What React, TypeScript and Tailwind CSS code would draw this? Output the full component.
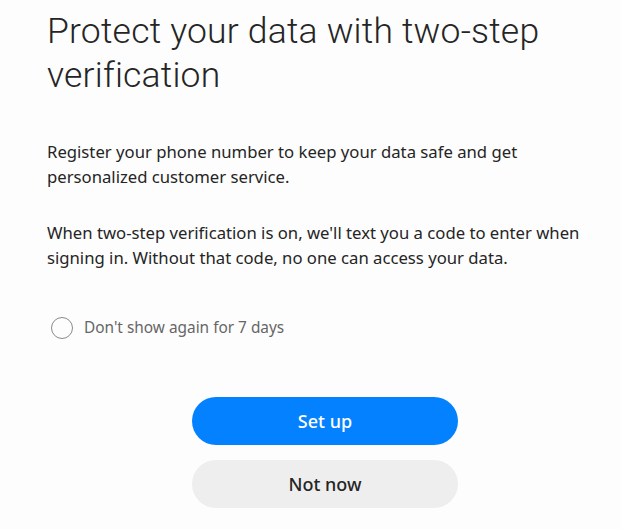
import React, { useState } from 'react';

const App: React.FC = () => {
  const [dontShow, setDontShow] = useState(false);

  return (
    <div
      className="min-h-screen w-full bg-[#fdfdfd] text-[#252525]"
      style={{ fontFamily: '"Noto Sans", Roboto, sans-serif' }}
    >
      <div className="pl-[47px] pt-[9px] w-[600px]">
        <h1
          className="text-[35.5px] leading-[44px] font-light tracking-[0.2px] w-[540px]"
          style={{ fontFamily: 'Roboto, "Noto Sans", sans-serif' }}
        >
          Protect your data with two-step verification
        </h1>

        <div className="mt-[42px] w-[545px] text-[16.7px] leading-[25px]">
          <p>
            Register your phone number to keep your data safe and get personalized customer service.
          </p>
          <p className="mt-[31px]">
            When two-step verification is on, we'll text you a code to enter when signing in. Without
            that code, no one can access your data.
          </p>
        </div>

        <button
          type="button"
          onClick={() => setDontShow(!dontShow)}
          className="mt-[46px] ml-[4px] flex items-center gap-[11px] text-[15.4px] text-[#666666]"
        >
          <span
            className={`h-[22px] w-[22px] rounded-full border-[1.5px] ${
              dontShow ? 'border-[#0381fe] bg-[#0381fe]' : 'border-[#8a8a8a]'
            }`}
          />
          Don't show again for 7 days
        </button>
      </div>

      <div className="mt-[58px] ml-[192px] flex flex-col gap-[15px]">
        <button
          type="button"
          className="h-[48px] w-[266px] rounded-full bg-[#0381fe] text-[18px] font-medium text-white"
        >
          Set up
        </button>
        <button
          type="button"
          className="h-[48px] w-[266px] rounded-full bg-[#eeeeee] text-[18px] font-medium text-[#252525]"
        >
          Not now
        </button>
      </div>
    </div>
  );
};

export default App;
